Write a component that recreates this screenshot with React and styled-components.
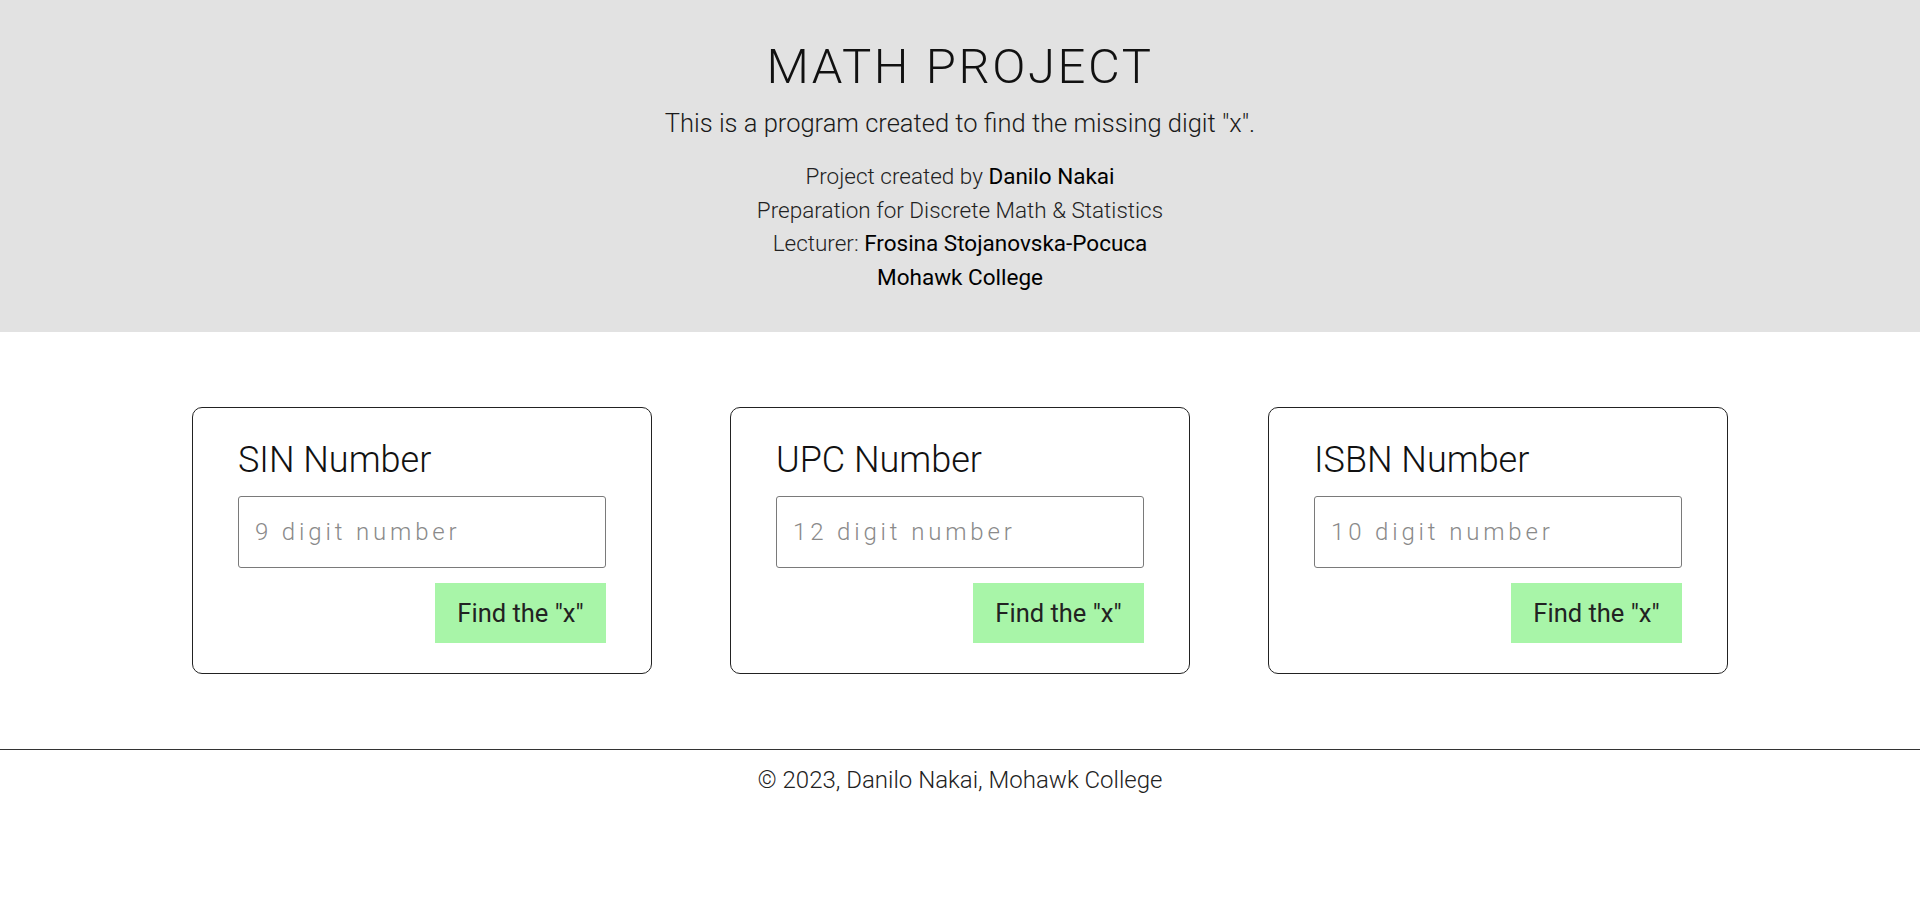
import React from "react";
import styled, { createGlobalStyle } from "styled-components";

const GlobalStyle = createGlobalStyle`
  body {
    margin: 0;
    font-family: Roboto, "Liberation Sans", sans-serif;
    background: #ffffff;
    color: #111;
  }
`;

const cards = [
  { id: "sin", title: "SIN Number", placeholder: "9 digit number" },
  { id: "upc", title: "UPC Number", placeholder: "12 digit number" },
  { id: "isbn", title: "ISBN Number", placeholder: "10 digit number" },
];

const App = () => {
  return (
    <Page>
      <GlobalStyle />
      <Header>
        <Title>MATH PROJECT</Title>
        <Subtitle>This is a program created to find the missing digit "x".</Subtitle>
        <Info>
          <InfoLine>
            Project created by <Strong>Danilo Nakai</Strong>
          </InfoLine>
          <InfoLine>Preparation for Discrete Math &amp; Statistics</InfoLine>
          <InfoLine>
            Lecturer: <Strong>Frosina Stojanovska-Pocuca</Strong>
          </InfoLine>
          <InfoLine>
            <Strong>Mohawk College</Strong>
          </InfoLine>
        </Info>
      </Header>

      <Cards>
        {cards.map((card) => (
          <Card key={card.id}>
            <CardTitle>{card.title}</CardTitle>
            <NumberInput type="text" placeholder={card.placeholder} />
            <Actions>
              <FindButton>Find the "x"</FindButton>
            </Actions>
          </Card>
        ))}
      </Cards>

      <Footer>
        <FooterText>© 2023, Danilo Nakai, Mohawk College</FooterText>
      </Footer>
    </Page>
  );
};

const Page = styled.div`
  min-height: 100vh;
`;

const Header = styled.header`
  background-color: #e2e2e2;
  padding: 38px 20px 38px;
  text-align: center;
`;

const Title = styled.h1`
  margin: 0;
  font-size: 49px;
  line-height: 58px;
  font-weight: 300;
  letter-spacing: 2.6px;
  color: #111;
`;

const Subtitle = styled.p`
  margin: 11px 0 0;
  font-size: 25.5px;
  line-height: 32px;
  font-weight: 300;
  color: #1a1a1a;
`;

const Info = styled.div`
  margin-top: 21px;
`;

const InfoLine = styled.div`
  font-size: 22.5px;
  line-height: 33.5px;
  font-weight: 300;
  color: #222;
`;

const Strong = styled.span`
  font-weight: 400;
  color: #000;
`;

const Cards = styled.main`
  display: flex;
  justify-content: center;
  gap: 78px;
  padding: 75px 0 75px;
`;

const Card = styled.section`
  width: 460px;
  box-sizing: border-box;
  border: 1px solid #222;
  border-radius: 10px;
  padding: 31px 45px 30px;
  display: flex;
  flex-direction: column;
`;

const CardTitle = styled.h2`
  margin: 0;
  font-size: 36px;
  line-height: 42px;
  font-weight: 300;
  color: #111;
`;

const NumberInput = styled.input`
  margin-top: 15px;
  height: 72px;
  box-sizing: border-box;
  border: 1px solid #7a7a7a;
  border-radius: 3px;
  padding: 0 16px;
  font-family: Roboto, "Liberation Sans", sans-serif;
  font-size: 24px;
  font-weight: 300;
  letter-spacing: 3.85px;
  outline: none;

  &::placeholder {
    color: #8a8a8a;
  }
`;

const Actions = styled.div`
  display: flex;
  justify-content: flex-end;
  margin-top: 15px;
`;

const FindButton = styled.button`
  width: 171px;
  height: 60px;
  border: none;
  background-color: #a8f5a8;
  font-family: Roboto, "Liberation Sans", sans-serif;
  font-size: 25.5px;
  font-weight: 400;
  color: #222;
  cursor: pointer;
`;

const Footer = styled.footer`
  border-top: 1px solid #333;
  padding-top: 14px;
  text-align: center;
`;

const FooterText = styled.p`
  margin: 0;
  font-size: 24px;
  line-height: 33px;
  font-weight: 300;
  color: #222;
`;

export default App;
